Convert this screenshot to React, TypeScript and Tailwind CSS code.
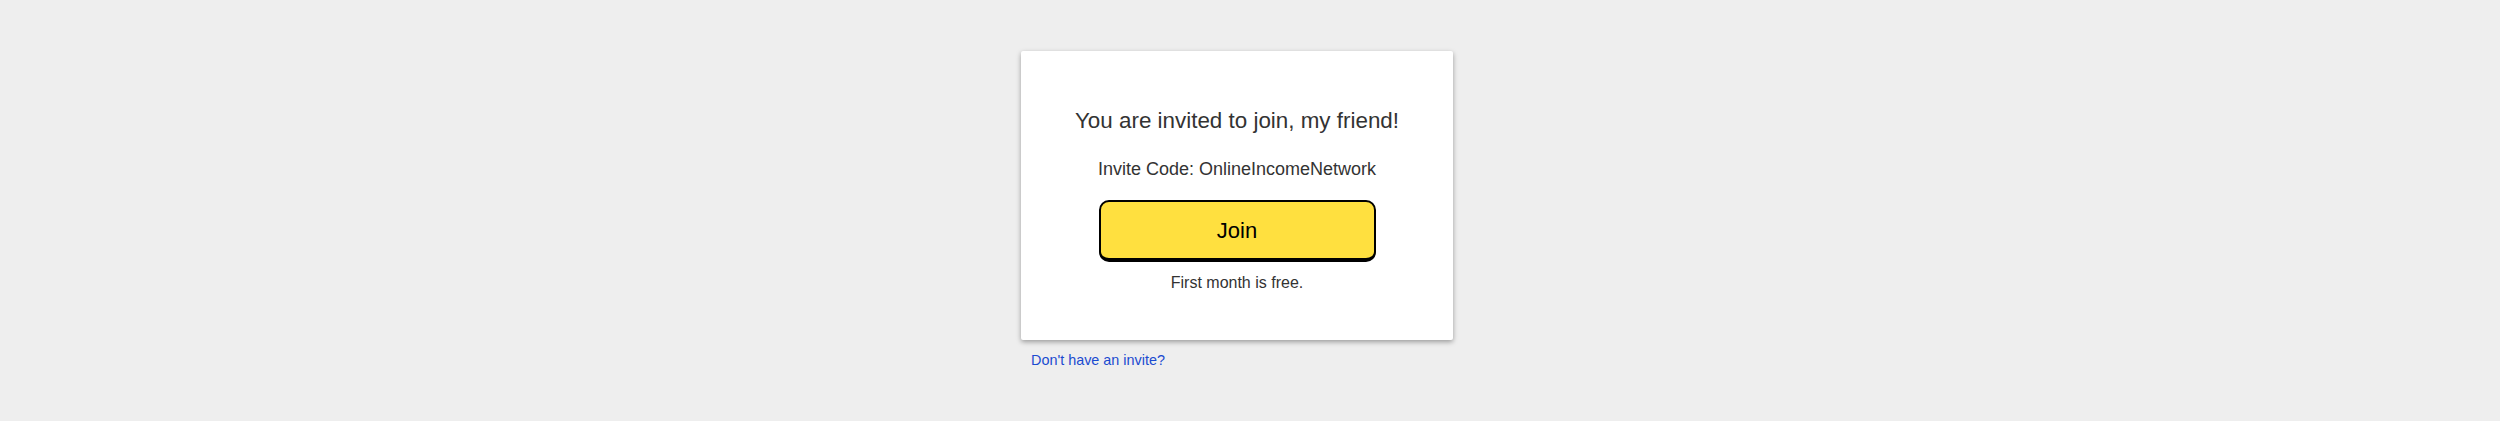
export default function App() {
  return (
    <div
      className="flex min-h-[421px] w-full justify-center bg-[#eeeeee] pr-[26px]"
      style={{ fontFamily: '"Liberation Sans", Arial, sans-serif' }}
    >
      <div className="mt-[51px] flex w-[432px] flex-col">
        <div className="flex h-[289px] flex-col items-center rounded-[2px] bg-white pt-[57px] shadow-[0_2px_5px_rgba(0,0,0,0.35)]">
          <h1 className="text-[22.4px] leading-[26px] text-[#333333]">You are invited to join, my friend!</h1>
          <p className="mt-[24px] text-[18px] leading-[22px] text-[#333333]">Invite Code: OnlineIncomeNetwork</p>
          <button
            type="button"
            className="mt-[20px] h-[62px] w-[277px] rounded-[10px] border-2 border-b-4 border-black bg-[#ffe03f] text-[22px] text-black"
          >
            Join
          </button>
          <p className="mt-[11px] text-[16px] leading-[19px] text-[#333333]">First month is free.</p>
        </div>
        <a href="#" className="mt-[12px] ml-[10px] text-[14.4px] leading-[17px] text-[#1a4bd0]">
          Don&apos;t have an invite?
        </a>
      </div>
    </div>
  );
}
